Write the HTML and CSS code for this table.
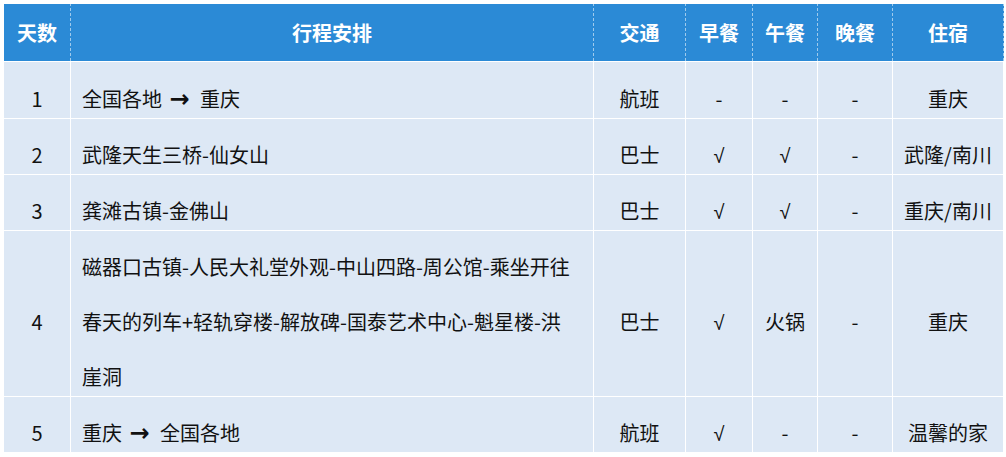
FILE: index.html
```html
<!DOCTYPE html>
<html lang="zh-CN">
<head>
<meta charset="utf-8">
<title>行程安排</title>
<link rel="stylesheet" href="styles.css">
</head>
<body>
<table class="trip">
  <colgroup>
    <col class="c-day">
    <col class="c-plan">
    <col class="c-traffic">
    <col class="c-meal1">
    <col class="c-meal2">
    <col class="c-meal3">
    <col class="c-stay">
  </colgroup>
  <thead>
    <tr>
      <th>天数</th>
      <th>行程安排</th>
      <th>交通</th>
      <th>早餐</th>
      <th>午餐</th>
      <th>晚餐</th>
      <th>住宿</th>
    </tr>
  </thead>
  <tbody>
    <tr>
      <td><span class="t">1</span></td>
      <td class="plan"><span class="t">全国各地 <span class="arrow">→</span> 重庆</span></td>
      <td><span class="t">航班</span></td>
      <td><span class="t">-</span></td>
      <td><span class="t">-</span></td>
      <td><span class="t">-</span></td>
      <td><span class="t">重庆</span></td>
    </tr>
    <tr>
      <td><span class="t">2</span></td>
      <td class="plan"><span class="t">武隆天生三桥-仙女山</span></td>
      <td><span class="t">巴士</span></td>
      <td><span class="t"><span class="ok">√</span></span></td>
      <td><span class="t"><span class="ok">√</span></span></td>
      <td><span class="t">-</span></td>
      <td><span class="t">武隆/南川</span></td>
    </tr>
    <tr>
      <td><span class="t">3</span></td>
      <td class="plan"><span class="t">龚滩古镇-金佛山</span></td>
      <td><span class="t">巴士</span></td>
      <td><span class="t"><span class="ok">√</span></span></td>
      <td><span class="t"><span class="ok">√</span></span></td>
      <td><span class="t">-</span></td>
      <td><span class="t">重庆/南川</span></td>
    </tr>
    <tr>
      <td><span class="t">4</span></td>
      <td class="plan"><span class="t">磁器口古镇-人民大礼堂外观-中山四路-周公馆-乘坐开往<br>春天的列车+轻轨穿楼-解放碑-国泰艺术中心-魁星楼-洪<br>崖洞</span></td>
      <td><span class="t">巴士</span></td>
      <td><span class="t"><span class="ok">√</span></span></td>
      <td><span class="t">火锅</span></td>
      <td><span class="t">-</span></td>
      <td><span class="t">重庆</span></td>
    </tr>
    <tr>
      <td><span class="t">5</span></td>
      <td class="plan"><span class="t">重庆 <span class="arrow">→</span> 全国各地</span></td>
      <td><span class="t">航班</span></td>
      <td><span class="t"><span class="ok">√</span></span></td>
      <td><span class="t">-</span></td>
      <td><span class="t">-</span></td>
      <td><span class="t">温馨的家</span></td>
    </tr>
  </tbody>
</table>
</body>
</html>
```

FILE: styles.css
```css
html, body {
  margin: 0;
  padding: 0;
  background: #ffffff;
}

body {
  padding: 3px 3px 0 3px;
  font-family: "Noto Sans CJK SC", "Noto Sans", sans-serif;
}

.trip {
  width: 1000px;
  border-collapse: collapse;
  table-layout: fixed;
  font-size: 20px;
  color: #111111;
}

.c-day { width: 67px; }
.c-plan { width: 523px; }
.c-traffic { width: 92px; }
.c-meal1 { width: 67px; }
.c-meal2 { width: 65px; }
.c-meal3 { width: 75px; }
.c-stay { width: 111px; }

.trip th {
  background: #2b8ad6;
  color: #ffffff;
  font-weight: 700;
  height: 57px;
  padding: 0;
  line-height: 57px;
  text-align: center;
  border: 1px dashed rgba(255, 255, 255, 0.55);
  border-bottom: 1px solid #ffffff;
}

.trip td {
  background: #dde8f5;
  border: 1px solid #ffffff;
  padding: 0 2px;
  line-height: 55px;
  text-align: center;
  vertical-align: middle;
  white-space: nowrap;
}

.trip td .t {
  display: block;
  margin: 8px 0 -8px;
}

.trip td.plan {
  text-align: left;
  padding: 0 11px;
}

.trip tbody tr:first-child td {
  height: 56px;
}

.arrow {
  font-family: "DejaVu Sans", sans-serif;
  font-weight: 700;
  font-size: 24px;
  line-height: 1;
  margin: 0 6px 0 3px;
}

.ok {
  font-family: "Liberation Sans", sans-serif;
  font-size: 20px;
  line-height: 1;
}
```
